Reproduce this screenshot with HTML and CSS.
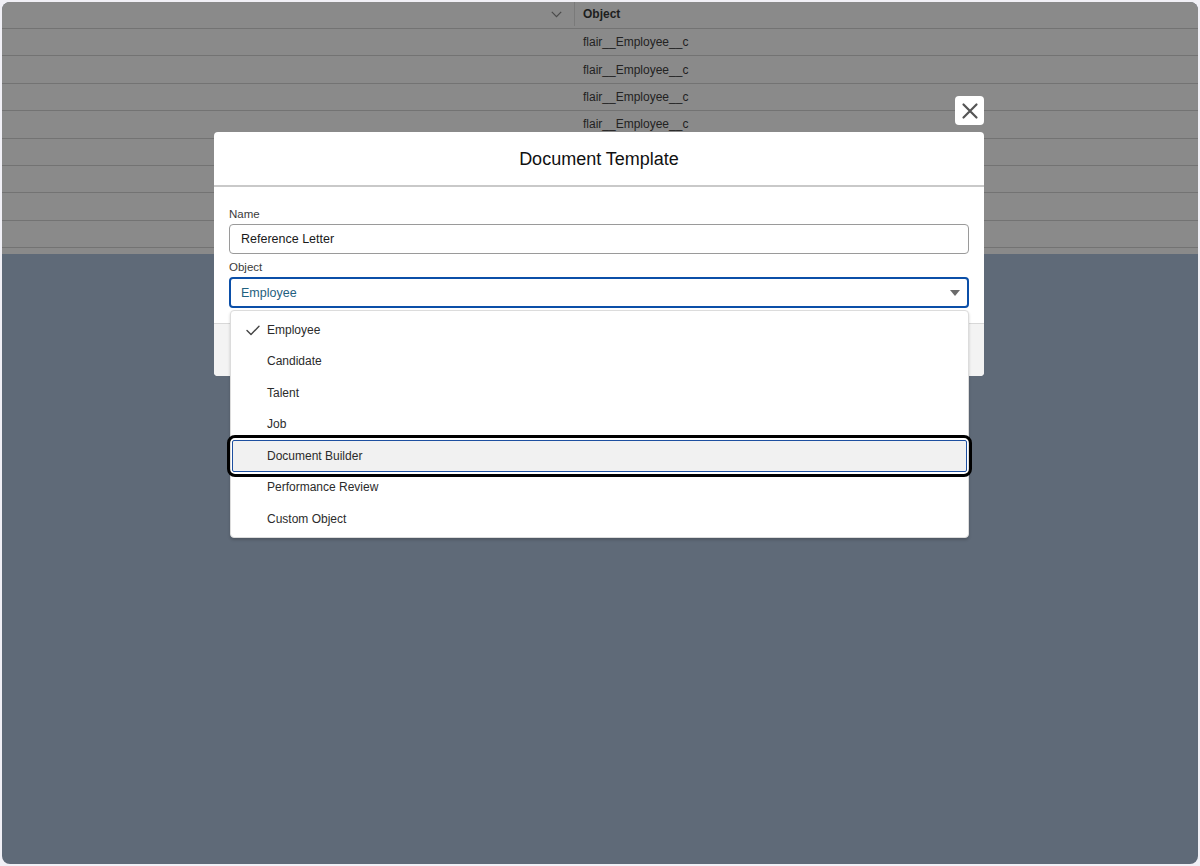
FILE: index.html
```html
<!DOCTYPE html>
<html>
<head>
<meta charset="utf-8">
<link rel="stylesheet" href="styles.css">
</head>
<body>
<div class="frame">
  <div class="table">
    <div class="thead">
      <div class="th-left">
        <svg class="chev" width="11" height="7" viewBox="0 0 11 7"><path d="M0.8 0.8 L5.5 5.6 L10.2 0.8" fill="none" stroke="#4a4a4a" stroke-width="1.2"/></svg>
      </div>
      <div class="th-obj">Object</div>
    </div>
    <div class="row"><div class="cell-left"></div><div class="cell-obj">flair__Employee__c</div></div>
    <div class="row"><div class="cell-left"></div><div class="cell-obj">flair__Employee__c</div></div>
    <div class="row"><div class="cell-left"></div><div class="cell-obj">flair__Employee__c</div></div>
    <div class="row"><div class="cell-left"></div><div class="cell-obj">flair__Employee__c</div></div>
    <div class="row"><div class="cell-left"></div><div class="cell-obj"></div></div>
    <div class="row"><div class="cell-left"></div><div class="cell-obj"></div></div>
    <div class="row"><div class="cell-left"></div><div class="cell-obj"></div></div>
    <div class="row"><div class="cell-left"></div><div class="cell-obj"></div></div>
    <div class="row last"><div class="cell-left"></div><div class="cell-obj"></div></div>
  </div>

  <div class="modal-layer">
    <button class="close-btn" aria-label="Close">
      <svg width="18" height="18" viewBox="0 0 18 18"><path d="M2.5 2.5 L15.5 15.5 M15.5 2.5 L2.5 15.5" stroke="#555" stroke-width="2.2" stroke-linecap="round"/></svg>
    </button>
    <div class="modal">
      <div class="modal-header">Document Template</div>
      <div class="modal-body">
        <label class="field-label">Name</label>
        <div class="input">Reference Letter</div>
        <label class="field-label obj-label">Object</label>
        <div class="select">
          <span class="select-value">Employee</span>
          <svg class="caret" width="10" height="6" viewBox="0 0 10 6"><path d="M0 0 L10 0 L5 6 Z" fill="#6b6b6b"/></svg>
        </div>
      </div>
      <div class="modal-footer"></div>
    </div>
    <div class="dropdown">
      <div class="opt">
        <svg class="check" width="14" height="11" viewBox="0 0 14 11"><path d="M1 5.6 L5 9.6 L13 1.2" fill="none" stroke="#444" stroke-width="1.4" stroke-linecap="round" stroke-linejoin="round"/></svg>
        <span>Employee</span>
      </div>
      <div class="opt"><span>Candidate</span></div>
      <div class="opt"><span>Talent</span></div>
      <div class="opt"><span>Job</span></div>
      <div class="opt active"><span>Document Builder</span></div>
      <div class="opt"><span>Performance Review</span></div>
      <div class="opt"><span>Custom Object</span></div>
    </div>
  </div>
</div>
</body>
</html>
```

FILE: styles.css
```css
* { box-sizing: border-box; }
html, body { margin: 0; padding: 0; }
body {
  background: #f1f0f6;
  width: 1200px;
  height: 866px;
  padding: 2px;
  font-family: "Liberation Sans", Arial, sans-serif;
  color: #181818;
}
.frame {
  position: relative;
  width: 1196px;
  height: 862px;
  border-radius: 8px;
  overflow: hidden;
  background: #5f6a78;
}
.table {
  background: #8a8a8a;
  height: 252px;
  display: flex;
  flex-direction: column;
}
.thead {
  display: flex;
  height: 27px;
  border-bottom: 1px solid #737373;
}
.th-left {
  width: 573px;
  display: flex;
  justify-content: flex-end;
  align-items: center;
  padding-right: 12px;
  border-right: 1px solid #7a7a7a;
  margin: 0 0 2px 0;
}
.chev { margin-top: 1px; }
.th-obj {
  padding-left: 8px;
  font-size: 12px;
  font-weight: bold;
  color: #1e1e1e;
  display: flex;
  align-items: center;
  padding-bottom: 2px;
}
.row {
  display: flex;
  height: 27.4px;
  border-bottom: 1px solid #737373;
}
.row.last { flex: 1; border-bottom: none; }
.cell-left { width: 573px; }
.cell-obj {
  padding-left: 8px;
  font-size: 12px;
  color: #222;
  display: flex;
  align-items: center;
}

.modal-layer {
  position: absolute;
  left: 0; top: 0;
  width: 100%; height: 100%;
}
.close-btn {
  position: absolute;
  left: 953px;
  top: 94px;
  width: 29px;
  height: 29px;
  background: #fff;
  border: none;
  border-radius: 4px;
  padding: 0;
  display: flex;
  align-items: center;
  justify-content: center;
}
.modal {
  position: absolute;
  left: 212px;
  top: 130px;
  width: 770px;
  height: 244px;
  background: #fff;
  border-radius: 4px;
  display: flex;
  flex-direction: column;
  overflow: hidden;
}
.modal-header {
  height: 55px;
  border-bottom: 2px solid #c9c9c9;
  display: flex;
  align-items: center;
  justify-content: center;
  font-size: 18px;
  color: #111;
  padding-top: 1px;
}
.modal-body {
  padding: 20px 15px 0 15px;
  display: flex;
  flex-direction: column;
  height: 136px;
}
.field-label {
  font-size: 11.5px;
  color: #3b3b3b;
  line-height: 14px;
  margin-bottom: 3px;
}
.obj-label { margin-top: 6px; margin-bottom: 3px; }
.input {
  height: 30px;
  border: 1px solid #9a9a9a;
  border-radius: 4px;
  padding: 0 11px;
  font-size: 12.5px;
  color: #1a1a1a;
  display: flex;
  align-items: center;
}
.select {
  height: 31px;
  border: 2px solid #0b4fa8;
  border-radius: 4px;
  padding: 0 7px 0 10px;
  font-size: 12.5px;
  display: flex;
  align-items: center;
  justify-content: space-between;
}
.select-value { color: #1f6180; }
.caret { margin-top: 1px; }
.modal-footer {
  flex: 1;
  background: #f3f3f3;
  border-top: 1px solid #d8d8d8;
}
.dropdown {
  position: absolute;
  left: 228px;
  top: 308px;
  width: 739px;
  height: 228px;
  background: #fff;
  border: 1px solid #dcdcdc;
  border-radius: 4px;
  box-shadow: 0 2px 3px rgba(0,0,0,0.18);
  padding: 3px 0 4px 0;
  display: flex;
  flex-direction: column;
}
.opt {
  position: relative;
  height: 31.5px;
  flex: none;
  display: flex;
  align-items: center;
  padding-left: 36px;
  font-size: 12px;
  color: #2b2b2b;
}
.check {
  position: absolute;
  left: 15px;
  top: 11px;
}
.opt.active {
  background: #f1f1f1;
  margin: 0 1px;
  padding-left: 34px;
  border: 1px solid #1d4fa0;
  border-radius: 2px;
}
.opt.active::after {
  content: "";
  position: absolute;
  left: -6px; right: -6px; top: -6px; bottom: -6px;
  border: 3px solid #000;
  border-radius: 8px;
}
```
